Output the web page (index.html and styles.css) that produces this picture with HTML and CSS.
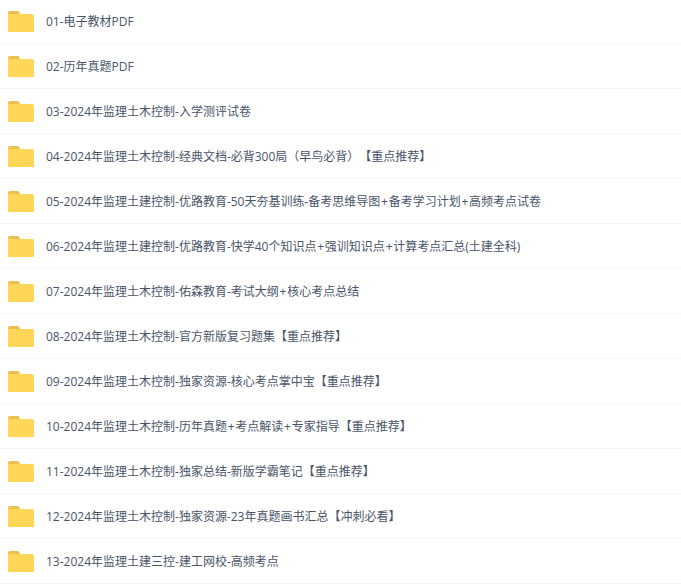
FILE: index.html
```html
<!DOCTYPE html>
<html lang="zh-CN">
<head>
  <meta charset="UTF-8" />
  <meta name="viewport" content="width=device-width, initial-scale=1.0"/>
  <title>文件列表</title>
  <link rel="stylesheet" href="styles.css">
</head>
<body>
  <svg class="icon-defs" width="0" height="0" aria-hidden="true">
    <symbol id="folder" viewBox="0 0 26 21">
      <path d="M0 2a2 2 0 0 1 2-2h7.5a2 2 0 0 1 1.6.8L12 3H0z" fill="#ecbf4e"/>
      <path d="M1 3h23a2 2 0 0 1 2 2v15a1 1 0 0 1-1 1H1a1 1 0 0 1-1-1V4a1 1 0 0 1 1-1z" fill="#ffd657"/>
    </symbol>
  </svg>
  <ul class="file-list">
    <li class="file-row"><svg class="folder"><use href="#folder"/></svg><span>01-电子教材PDF</span></li>
    <li class="file-row"><svg class="folder"><use href="#folder"/></svg><span>02-历年真题PDF</span></li>
    <li class="file-row"><svg class="folder"><use href="#folder"/></svg><span>03-2024年监理土木控制-入学测评试卷</span></li>
    <li class="file-row"><svg class="folder"><use href="#folder"/></svg><span>04-2024年监理土木控制-经典文档-必背300局（早鸟必背）【重点推荐】</span></li>
    <li class="file-row"><svg class="folder"><use href="#folder"/></svg><span>05-2024年监理土建控制-优路教育-50天夯基训练-备考思维导图<b class="plus">+</b>备考学习计划<b class="plus">+</b>高频考点试卷</span></li>
    <li class="file-row"><svg class="folder"><use href="#folder"/></svg><span>06-2024年监理土建控制-优路教育-快学40个知识点<b class="plus">+</b>强训知识点<b class="plus">+</b>计算考点汇总(土建全科)</span></li>
    <li class="file-row"><svg class="folder"><use href="#folder"/></svg><span>07-2024年监理土木控制-佑森教育-考试大纲<b class="plus">+</b>核心考点总结</span></li>
    <li class="file-row"><svg class="folder"><use href="#folder"/></svg><span>08-2024年监理土木控制-官方新版复习题集【重点推荐】</span></li>
    <li class="file-row"><svg class="folder"><use href="#folder"/></svg><span>09-2024年监理土木控制-独家资源-核心考点掌中宝【重点推荐】</span></li>
    <li class="file-row"><svg class="folder"><use href="#folder"/></svg><span>10-2024年监理土木控制-历年真题<b class="plus">+</b>考点解读<b class="plus">+</b>专家指导【重点推荐】</span></li>
    <li class="file-row"><svg class="folder"><use href="#folder"/></svg><span>11-2024年监理土木控制-独家总结-新版学霸笔记【重点推荐】</span></li>
    <li class="file-row"><svg class="folder"><use href="#folder"/></svg><span>12-2024年监理土木控制-独家资源-23年真题画书汇总【冲刺必看】</span></li>
    <li class="file-row"><svg class="folder"><use href="#folder"/></svg><span>13-2024年监理土建三控-建工网校-高频考点</span></li>
  </ul>
</body>
</html>
```

FILE: styles.css
```css
* {
  box-sizing: border-box;
  margin: 0;
  padding: 0;
}
body {
  font-family: "Open Sans", "Noto Sans CJK SC", sans-serif;
  font-size: 12px;
  color: #4a5468;
  background: #fff;
  text-spacing-trim: space-all;
  overflow: hidden;
}
.icon-defs {
  position: absolute;
}

.file-list {
  list-style: none;
  margin-top: -1px;
}
.file-row {
  display: flex;
  align-items: center;
  gap: 12px;
  height: 45px;
  padding: 0 0 1px 8px;
  border-bottom: 1px solid #f4f6fa;
}
.folder {
  width: 26px;
  height: 21px;
  flex: none;
  margin-top: 2px;
}
/* plus signs sit wider in the file names */
.plus {
  font-weight: normal;
  margin: 0 0.75px;
}
```
